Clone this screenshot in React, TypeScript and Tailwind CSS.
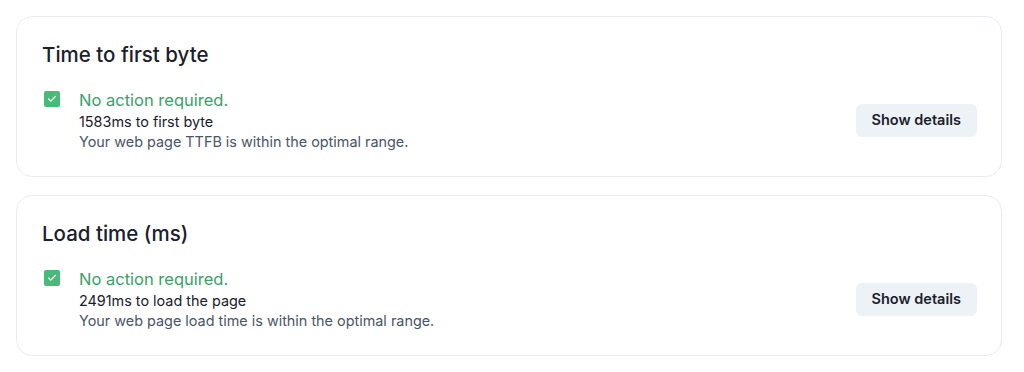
import { Check } from "lucide-react";

const audits = [
  {
    title: "Time to first byte",
    value: "1583ms to first byte",
    note: "Your web page TTFB is within the optimal range.",
  },
  {
    title: "Load time (ms)",
    value: "2491ms to load the page",
    note: "Your web page load time is within the optimal range.",
  },
];

function AuditCard({ title, value, note }: (typeof audits)[number]) {
  return (
    <div className="rounded-2xl border border-[#e8ecf1] bg-white py-6 pr-6 pl-[25px]">
      <h2 className="text-[20.5px] leading-7 font-medium text-[#1a202c]">
        {title}
      </h2>
      <div className="mt-[19px] flex items-center justify-between">
        <div className="flex items-start gap-[19px]">
          <div className="mt-[3px] ml-[2px] flex h-4 w-4 items-center justify-center rounded-[2px] bg-[#48bb78]">
            <Check className="h-2.5 w-2.5 text-white" strokeWidth={3} />
          </div>
          <div>
            <p className="text-[16.5px] leading-6 text-[#38a169]">
              No action required.
            </p>
            <p className="text-[14.4px] leading-5 text-[#1a202c]">{value}</p>
            <p className="text-[14.4px] leading-5 text-[#4a5568]">{note}</p>
          </div>
        </div>
        <button className="h-[33px] rounded-md bg-[#edf2f7] px-4 text-[14.5px] font-semibold text-[#1a202c]">
          Show details
        </button>
      </div>
    </div>
  );
}

export default function App() {
  return (
    <main
      className="min-h-screen bg-white pt-4 pl-4 pr-[22px]"
      style={{ fontFamily: "Inter, 'Noto Sans', sans-serif" }}
    >
      <div className="flex flex-col gap-[18px]">
        {audits.map((a) => (
          <AuditCard key={a.title} {...a} />
        ))}
      </div>
    </main>
  );
}
